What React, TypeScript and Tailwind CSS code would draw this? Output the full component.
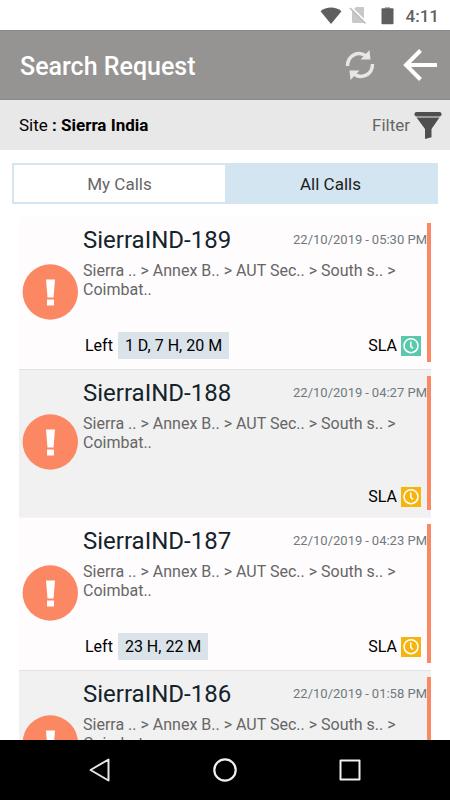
/**
 * Search request screen
 * Shows the service calls of a site with their SLA state
 */
import React, { useState } from 'react';
import clsx from 'clsx';

interface Call {
  id: string;
  date: string;
  time: string;
  left?: string;
  sla: 'ok' | 'warning';
}

const LOCATION = 'Sierra .. > Annex B.. > AUT Sec.. > South s.. > Coimbat..';

const CALLS: Call[] = [
  { id: 'SierraIND-189', date: '22/10/2019', time: '05:30 PM', left: '1 D, 7 H, 20 M', sla: 'ok' },
  { id: 'SierraIND-188', date: '22/10/2019', time: '04:27 PM', sla: 'warning' },
  { id: 'SierraIND-187', date: '22/10/2019', time: '04:23 PM', left: '23 H, 22 M', sla: 'warning' },
  { id: 'SierraIND-186', date: '22/10/2019', time: '01:58 PM', sla: 'warning' },
];

const StatusBar: React.FC = () => (
  <div className="flex h-[30px] shrink-0 items-center justify-end bg-white pt-[2px] pr-[11px] text-[#5f5f5f]">
    <svg className="mr-[7px] h-[18px] w-[22px]" viewBox="0 0 22 18" fill="currentColor">
      <path d="M11 17 0.500 4.200C3.400 1.500 7 .4 11 .4s7.600 1.100 10.500 3.800z" />
    </svg>
    <svg className="mr-[14px] h-[18px] w-[18px]" viewBox="0 0 18 18">
      <path d="M7 0h7q1 0 1 1v14q0 1-1 1H4q-1 0-1-1V4z" fill="#c8c8c8" />
      <path d="M1.500 0 17.500 16" stroke="#fff" strokeWidth="2.500" />
      <path d="M1 1 16.500 16.500" stroke="#b8b8b8" strokeWidth="1.500" />
    </svg>
    <svg className="mr-3 h-[18px] w-[13px]" viewBox="0 0 13 18">
      <path d="M4 0h5v2H4z" fill="#b0b0b0" />
      <rect x="0.500" y="1.200" width="12" height="16" rx="1" fill="currentColor" />
    </svg>
    <span className="text-[17px] leading-5 font-medium">4:11</span>
  </div>
);

const RefreshIcon: React.FC = () => (
  <svg className="h-[30px] w-[30px]" viewBox="0 0 30 30">
    <g fill="none" stroke="#e6e6e6" strokeWidth="3.500">
      <path d="M2.500 16C2.500 5 13.500 .5 21 6" />
      <path d="M27.500 14C27.500 25 16.500 29.500 9 24" />
    </g>
    <path d="M24.500 0 25.500 9.500H15.500z" fill="#e6e6e6" />
    <path d="M5.500 30 4.500 20.500H14.500z" fill="#e6e6e6" />
  </svg>
);

const BackIcon: React.FC = () => (
  <svg className="h-[32px] w-[36px]" viewBox="0 0 36 32" fill="none" stroke="#fff" strokeWidth="4">
    <path d="M35 16H3.500" />
    <path d="M18.500 1.500 4 16l14.500 14.500" />
  </svg>
);

const FilterIcon: React.FC = () => (
  <svg className="h-[28px] w-[28px]" viewBox="0 0 28 28" fill="#4f4f4f">
    <rect x="0.500" y="0" width="27" height="4.500" rx="2" />
    <path d="M2.500 5.500h23L17.500 17v8.300L11 27V17z" />
  </svg>
);

const AlertIcon: React.FC = () => (
  <svg className="h-[56px] w-[56px] shrink-0" viewBox="0 0 56 56">
    <circle cx="28.300" cy="28" r="27.700" fill="#fc8763" />
    <path d="M24 15.500h9l-1.500 18h-6z" fill="#fff" />
    <path d="M25 35.500h7v6h-7z" fill="#fff" />
  </svg>
);

const ClockIcon: React.FC<{ sla: Call['sla'] }> = ({ sla }) => (
  <svg
    className={clsx('h-5 w-5', sla === 'ok' ? 'bg-[#5bc8ae]' : 'bg-[#f6b40e]')}
    viewBox="0 0 20 20"
    fill="none"
    stroke="#fff"
    strokeWidth="1.500"
  >
    <circle cx="10" cy="9.700" r="7" />
    <path d="M9.800 5.500v5l2.200 1.800" />
  </svg>
);

const CallRow: React.FC<{ call: Call }> = ({ call }) => (
  <li className="flex border-b border-[#dde3e8] pt-[6px] pb-[7px] odd:bg-[#fefcfd] even:border-[#f6f4f5] even:bg-[#f1f1f1]">
    <div className="flex items-center px-[3px] pb-[2px]">
      <AlertIcon />
    </div>
    <div className="flex min-w-0 flex-1 flex-col border-r-4 border-[#fc8763] pl-[2px]">
      <div className="flex items-center justify-between">
        <h2 className="text-2xl leading-[34px] text-[#14232a]">{call.id}</h2>
        <p className="flex gap-[3px] text-[13px] text-[#6f797e]">
          <span>{call.date}</span>
          <span>-</span>
          <span>{call.time}</span>
        </p>
      </div>
      <p className="mt-1 pr-6 text-base leading-[19px] text-[#666]">{LOCATION}</p>
      <div
        className={clsx(
          'flex items-center justify-between pr-[6px] pl-[2px] text-base text-black',
          call.left ? 'mt-[33px] mb-[3px] h-[27px]' : 'mt-[35px] mb-[3px] h-[20px]'
        )}
      >
        <div className="flex items-center gap-[5px]">
          {call.left && (
            <>
              <span>Left</span>
              <span className="bg-[#dae3ea] px-[7px] leading-[27px]">{call.left}</span>
            </>
          )}
        </div>
        <div className="flex items-center gap-1">
          <span>SLA</span>
          <ClockIcon sla={call.sla} />
        </div>
      </div>
    </div>
  </li>
);

const NavBar: React.FC = () => (
  <nav className="flex h-[60px] shrink-0 items-center justify-center gap-[101px] bg-black">
    <button type="button" aria-label="Back">
      <svg className="h-6 w-6" viewBox="0 0 24 24" fill="none" stroke="#e6e6e6" strokeWidth="2" strokeLinejoin="round">
        <path d="M20.500 1.500v21L2.500 12z" />
      </svg>
    </button>
    <button type="button" aria-label="Home">
      <svg className="h-6 w-6" viewBox="0 0 24 24" fill="none" stroke="#f0f0f0" strokeWidth="2.200">
        <circle cx="12" cy="12" r="10.700" />
      </svg>
    </button>
    <button type="button" aria-label="Recent apps">
      <svg className="h-6 w-6" viewBox="0 0 24 24" fill="none" stroke="#f0f0f0" strokeWidth="2" strokeLinejoin="round">
        <rect x="2.500" y="2.500" width="19" height="19" />
      </svg>
    </button>
  </nav>
);

export default function App() {
  const [tab, setTab] = useState<'my' | 'all'>('all');

  const tabClass = (active: boolean) =>
    clsx('h-full flex-1 pt-[2px] text-[17px]', active ? 'bg-[#d3e5f0] text-[#1c1c1c]' : 'bg-white text-[#666]');

  return (
    <div className="flex h-screen flex-col bg-white font-['Roboto',sans-serif]">
      <StatusBar />

      <header className="flex h-[70px] shrink-0 items-center justify-between border-y border-[#8a8988] bg-[#959492] pr-3 pl-5">
        <h1 className="pt-1 text-[25px] leading-8 font-medium text-white">Search Request</h1>
        <div className="flex items-center gap-[27px]">
          <button type="button" aria-label="Refresh">
            <RefreshIcon />
          </button>
          <button type="button" aria-label="Go back">
            <BackIcon />
          </button>
        </div>
      </header>

      <div className="flex h-[50px] shrink-0 items-center justify-between bg-[#e8e8e8] pt-[2px] pr-2 pl-[19px] text-[17px]">
        <p className="text-black">
          Site <b>: Sierra India</b>
        </p>
        <button type="button" className="flex items-center gap-1 text-[#666]">
          Filter
          <FilterIcon />
        </button>
      </div>

      <div className="mx-3 mt-[13px] flex h-[41px] shrink-0 border-2 border-[#d3e5f0]">
        <button type="button" className={tabClass(tab === 'my')} onClick={() => setTab('my')}>
          My Calls
        </button>
        <button type="button" className={tabClass(tab === 'all')} onClick={() => setTab('all')}>
          All Calls
        </button>
      </div>

      <ul className="mx-[19px] mt-[13px] min-h-0 flex-1 overflow-y-auto [scrollbar-width:none]">
        {CALLS.map((call) => (
          <CallRow key={call.id} call={call} />
        ))}
      </ul>

      <NavBar />
    </div>
  );
}
